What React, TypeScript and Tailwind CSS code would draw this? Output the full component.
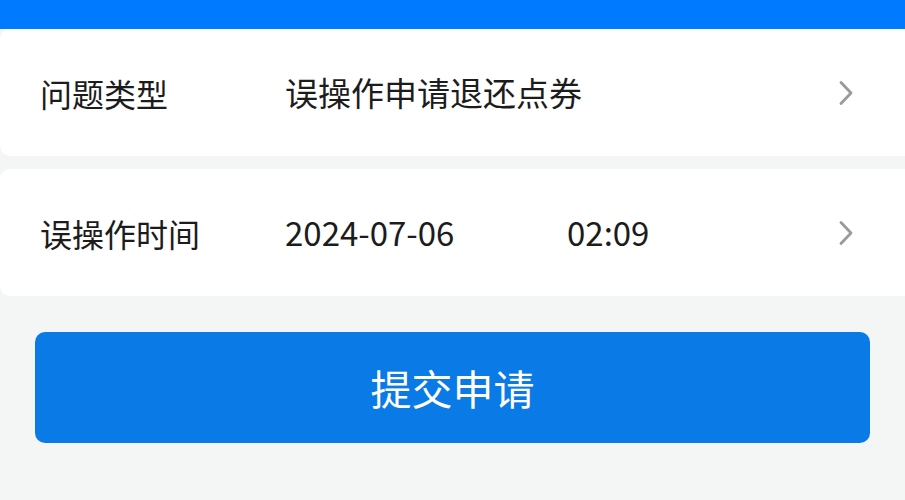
import React from "react";

function Chevron() {
  return (
    <svg width="16" height="26" viewBox="0 0 16 26" fill="none" className="shrink-0">
      <path d="M3 2.5 L13 13 L3 23.5" stroke="#9a9a9a" strokeWidth="2.8" strokeLinecap="round" strokeLinejoin="round" />
    </svg>
  );
}

function Row({ label, children }: { label: string; children: React.ReactNode }) {
  return (
    <div className="flex h-[127px] items-center rounded-l-[10px] bg-white pl-[40px] pr-[51px]">
      <div className="w-[245px] text-[32px] leading-none text-[#1c1c1c]">{label}</div>
      <div className="flex flex-1 items-center text-[33px] leading-none text-[#1c1c1c]">{children}</div>
      <Chevron />
    </div>
  );
}

export default function App() {
  return (
    <div
      className="flex h-[500px] w-[905px] flex-col overflow-hidden bg-[#f4f5f5]"
      style={{ fontFamily: '"Noto Sans CJK SC", "Noto Sans", sans-serif' }}
    >
      <div className="h-[29px] shrink-0 bg-[#007aff]" />
      <Row label="问题类型">误操作申请退还点券</Row>
      <div className="h-[13px] shrink-0" />
      <Row label="误操作时间">
        <span className="w-[282px]">2024-07-06</span>
        <span>02:09</span>
      </Row>
      <div className="px-[35px] pt-[36px]">
        <button className="flex h-[111px] w-full items-center justify-center rounded-[10px] bg-[#0a7ae6] text-[41px] leading-none text-white">
          提交申请
        </button>
      </div>
    </div>
  );
}
